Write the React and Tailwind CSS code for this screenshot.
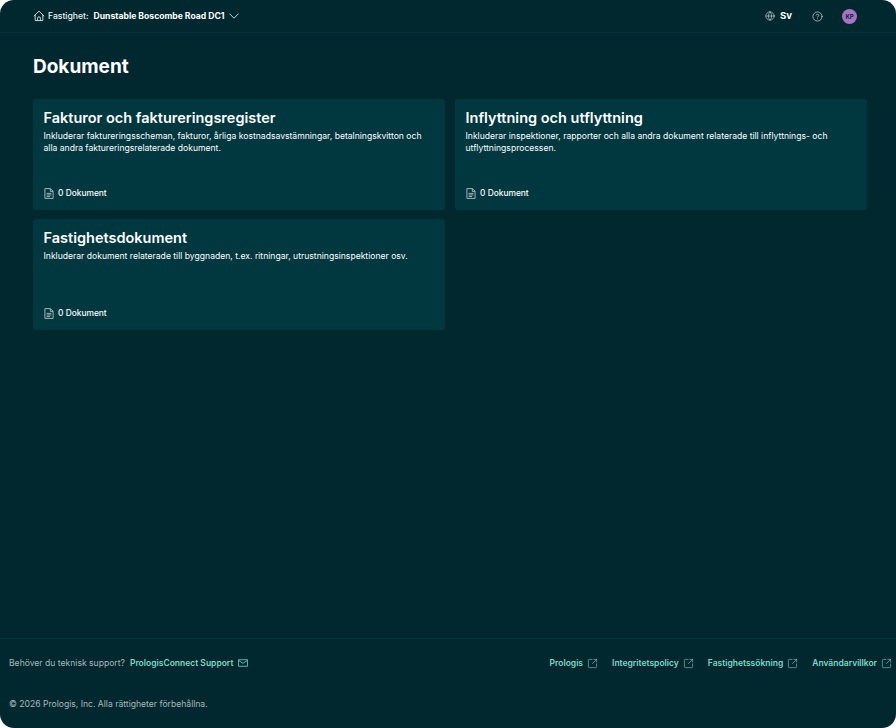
import { CircleHelp, Globe, SquareArrowOutUpRight } from "lucide-react";

const cards = [
  {
    title: "Fakturor och faktureringsregister",
    text: "Inkluderar faktureringsscheman, fakturor, årliga kostnadsavstämningar, betalningskvitton och alla andra faktureringsrelaterade dokument.",
  },
  {
    title: "Inflyttning och utflyttning",
    text: "Inkluderar inspektioner, rapporter och alla andra dokument relaterade till inflyttnings- och utflyttningsprocessen.",
  },
  {
    title: "Fastighetsdokument",
    text: "Inkluderar dokument relaterade till byggnaden, t.ex. ritningar, utrustningsinspektioner osv.",
  },
];

const links = ["Prologis", "Integritetspolicy", "Fastighetssökning", "Användarvillkor"];

const HouseIcon = () => (
  <svg viewBox="0 0 12 12" className="size-[12px] text-[#dfe5e6]" fill="none" stroke="currentColor" strokeWidth="0.9">
    <path d="M0.8 6.2 6 1.2l5.2 5M2.2 5v5.6h7.6V5M4.6 10.6V8.2a1.4 1.4 0 0 1 2.8 0v2.4" />
  </svg>
);

const ChevronIcon = () => (
  <svg viewBox="0 0 10 6" className="ml-[5px] h-[6px] w-[10px] text-[#dfe5e6]" fill="none" stroke="currentColor" strokeWidth="0.9">
    <path d="M0.5 0.7 5 5.2l4.5-4.5" />
  </svg>
);

const DocIcon = () => (
  <svg viewBox="0 0 10 11" className="h-[11px] w-[10px] text-[#c9d3d5]" fill="none" stroke="currentColor" strokeWidth="0.8">
    <path d="M0.9 0.6h5.6l2.6 2.6v7.2H0.9zM6.3 0.8v2.6h2.6M2.6 5.4h4.8M2.6 7h4.8M2.6 8.6h3.4" />
  </svg>
);

const MailIcon = () => (
  <svg viewBox="0 0 11 9" className="ml-[5px] h-[8px] w-[10px] text-[#7dd8c8]" fill="none" stroke="currentColor" strokeWidth="0.9">
    <path d="M0.5 0.8h10v7.4h-10zM0.5 1.6l5 3.2 5-3.2" />
  </svg>
);

const Card = ({ title, text }) => (
  <div className="flex h-[111px] flex-col rounded-[3px] bg-[#01373f] px-[10.5px] pt-[9px]">
    <h2 className="text-[14.5px] leading-[20px] font-semibold text-white">{title}</h2>
    <p className="mt-[2px] text-[8.6px] leading-[12px] text-white">{text}</p>
    <div className="mt-auto mb-[10px] flex items-center gap-[4.5px] text-[8.4px] font-medium text-white">
      <DocIcon />
      0 Dokument
    </div>
  </div>
);

export default function App() {
  return (
    <div className="h-[728px] w-[896px] bg-white font-['Inter',sans-serif]">
      <div className="flex h-full flex-col rounded-[14px] bg-[#01282f]">
        <header className="flex h-[33px] items-center justify-between border-b border-[#03343c] pr-[39px] pl-[33px] text-[8.6px] text-white">
          <div className="flex items-center">
            <HouseIcon />
            <span className="ml-[3px] font-medium text-[#eef2f2]">Fastighet:</span>
            <span className="ml-[5px] font-bold">Dunstable Boscombe Road DC1</span>
            <ChevronIcon />
          </div>
          <div className="flex items-center">
            <Globe className="size-[10px] text-[#e3e8e9]" strokeWidth={1.4} />
            <span className="ml-[5px] text-[9.6px] font-bold">Sv</span>
            <CircleHelp className="ml-[20px] size-[11px] text-[#e3e8e9]" strokeWidth={1.4} />
            <span className="ml-[19px] flex size-[15px] items-center justify-center rounded-full bg-[#a873c5] text-[6px] font-bold text-[#01282f]">
              KP
            </span>
          </div>
        </header>

        <main className="flex-1 pr-[29px] pl-[33px]">
          <h1 className="mt-[21px] text-[19px] leading-[26px] font-bold text-white">Dokument</h1>
          <div className="mt-[19px] grid grid-cols-2 gap-x-[10px] gap-y-[9px]">
            {cards.map((c) => (
              <Card key={c.title} title={c.title} text={c.text} />
            ))}
          </div>
        </main>

        <footer className="h-[90px] border-t border-[#03343c] pr-[4px] pl-[9px] text-[8.6px]">
          <div className="mt-[18px] flex items-center justify-between">
            <div className="flex items-center">
              <span className="text-[#a9b8bb]">Behöver du teknisk support?</span>
              <span className="ml-[5px] text-[8.5px] font-semibold text-[#7dd8c8]">PrologisConnect Support</span>
              <MailIcon />
            </div>
            <div className="flex items-center gap-[14px] text-[8.5px]">
              {links.map((l) => (
                <span key={l} className="flex items-center gap-[4px] font-semibold text-[#7dd8c8]">
                  {l}
                  <SquareArrowOutUpRight className="size-[11px]" strokeWidth={1.3} />
                </span>
              ))}
            </div>
          </div>
          <p className="mt-[28px] text-[#a9b8bb]">© 2026 Prologis, Inc. Alla rättigheter förbehållna.</p>
        </footer>
      </div>
    </div>
  );
}
